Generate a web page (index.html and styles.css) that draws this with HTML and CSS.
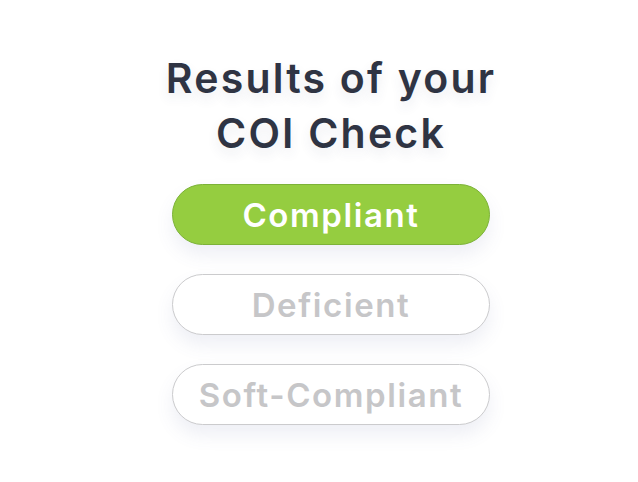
FILE: index.html
```html
<!DOCTYPE html>
<html>
<head>
<meta charset="utf-8">
<link rel="stylesheet" href="styles.css">
</head>
<body>
<main class="page">
  <h1 class="title">Results of your<br>COI Check</h1>
  <div class="options">
    <div class="pill pill-active">Compliant</div>
    <div class="pill">Deficient</div>
    <div class="pill">Soft-Compliant</div>
  </div>
</main>
</body>
</html>
```
FILE: styles.css
```css
html, body {
  margin: 0;
  padding: 0;
  background: #ffffff;
}
.page {
  box-sizing: border-box;
  width: 638px;
  height: 482px;
  padding-left: 24px;
  display: flex;
  flex-direction: column;
  align-items: center;
  font-family: Inter, "Liberation Sans", sans-serif;
}
.title {
  margin: 51px 0 0 0;
  font-size: 41px;
  line-height: 55px;
  font-weight: 600;
  color: #2f3443;
  text-align: center;
  letter-spacing: 2.2px;
  text-shadow: 0 6px 12px rgba(60, 70, 110, 0.10);
}
.options {
  margin-top: 23px;
  display: flex;
  flex-direction: column;
  gap: 29px;
}
.pill {
  box-sizing: border-box;
  width: 318px;
  height: 61px;
  border-radius: 31px;
  border: 1.5px solid #cbcbcd;
  background: #ffffff;
  color: #c6c6c8;
  font-size: 33px;
  font-weight: 600;
  letter-spacing: 1.6px;
  display: flex;
  align-items: center;
  justify-content: center;
  box-shadow: 0 10px 18px rgba(90, 100, 160, 0.10);
}
.pill-active {
  background: #95cd40;
  border-color: #7cb238;
  color: #ffffff;
}
```
